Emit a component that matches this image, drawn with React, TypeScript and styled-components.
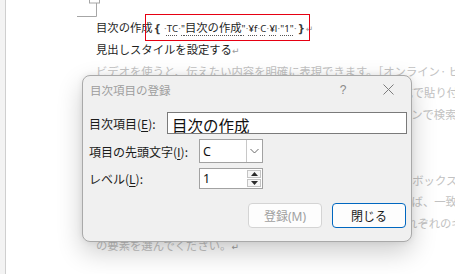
import styled, { createGlobalStyle } from 'styled-components'

const GlobalStyle = createGlobalStyle`
  html, body {
    margin: 0;
    padding: 0;
    background: #ffffff;
  }
  #root {
    width: 455px;
    height: 274px;
    overflow: hidden;
  }
`

const Screen = styled.div`
  position: relative;
  display: flex;
  width: 455px;
  height: 274px;
  overflow: hidden;
  background: #ffffff;
  font-family: 'Noto Sans CJK JP', sans-serif;
`

const Gutter = styled.div`
  flex: none;
  width: 5px;
  background: #f3f3f3;
  border-right: 1px solid #cfcfcf;
`

const Page = styled.div`
  flex: 1;
  min-width: 0;
  display: flex;
  flex-direction: column;
`

const CropMark = styled.svg`
  display: block;
  flex: none;
  margin-left: 66px;
`

const TextBlock = styled.div`
  padding-left: 90px;
`

const Line = styled.div<{ $faded?: boolean }>`
  height: 21.8px;
  line-height: 21.8px;
  font-size: 11.33px;
  white-space: nowrap;
  color: ${p => (p.$faded ? '#c2c2c2' : '#1e1e1e')};
`

const Mark = styled.span`
  color: #9c9c9c;
  font-family: 'DejaVu Sans', sans-serif;
  font-size: 9px;
`

const Brace = styled.span<{ $gap: number }>`
  display: inline-block;
  font-family: 'DejaVu Sans', sans-serif;
  font-weight: bold;
  font-size: 10px;
  color: #3a3a3a;
  margin-right: ${p => p.$gap}px;
  margin-left: 1px;
`

const FieldCode = styled.span`
  font-family: 'Noto Sans', 'Noto Sans CJK JP', sans-serif;
  font-size: 9.6px;
  text-decoration: underline dotted #555;
  text-underline-offset: 3px;
`

const FieldKanji = styled.span`
  font-family: 'Noto Sans CJK JP', sans-serif;
  font-size: 11.33px;
`

const Dot = styled.span`
  display: inline-block;
  width: 3px;
  text-align: center;
  color: #8a8a8a;
`

const Highlight = styled.div`
  position: absolute;
  left: 145px;
  top: 14px;
  width: 165px;
  height: 27px;
  box-sizing: border-box;
  border: 1.5px solid #e60012;
`

const Dialog = styled.div`
  position: absolute;
  left: 82px;
  top: 75px;
  width: 330px;
  height: 167px;
  box-sizing: border-box;
  display: flex;
  flex-direction: column;
  border: 1px solid #a9a9a9;
  border-radius: 8px;
  background: #f0f0f0;
  box-shadow: 0 10px 26px rgba(0, 0, 0, 0.2), 0 0 6px rgba(0, 0, 0, 0.08);
  font-family: 'Noto Sans', 'Noto Sans CJK JP', sans-serif;
`

const TitleBar = styled.div`
  height: 27px;
  display: flex;
  align-items: center;
  padding-left: 7px;
`

const Title = styled.div`
  flex: 1;
  font-family: 'Noto Sans CJK JP', sans-serif;
  font-size: 11.5px;
  color: #9d9d9d;
`

const TitleButton = styled.div<{ $width: number }>`
  width: ${p => p.$width}px;
  display: flex;
  justify-content: center;
  align-items: center;
  color: #8a8a8a;
  font-size: 12px;
  font-family: 'Liberation Sans', sans-serif;
`

const Form = styled.div`
  display: flex;
  flex-direction: column;
  padding: 9px 4px 0 6px;
`

const Row = styled.div<{ $height: number; $gap: number }>`
  display: flex;
  align-items: center;
  height: ${p => p.$height}px;
  margin-bottom: ${p => p.$gap}px;
`

const Label = styled.div<{ $width: number }>`
  flex: none;
  width: ${p => p.$width}px;
  font-size: 12px;
  color: #1a1a1a;
  font-family: 'Noto Sans CJK JP', sans-serif;
  white-space: nowrap;

  u {
    text-decoration-thickness: 1px;
    text-underline-offset: 2px;
  }
`

const EntryField = styled.div`
  flex: 1;
  height: 100%;
  box-sizing: border-box;
  border: 1px solid #7a7a7a;
  background: #ffffff;
  padding-left: 4px;
  display: flex;
  align-items: flex-end;
  overflow: hidden;
  font-family: 'Noto Sans CJK JP', sans-serif;
  font-size: 15.5px;
  line-height: 16px;
  color: #111;
`

const SmallBox = styled.div`
  width: 64px;
  height: 100%;
  box-sizing: border-box;
  border: 1px solid #a2a2a2;
  background: #ffffff;
  display: flex;
  align-items: stretch;
`

const BoxValue = styled.div`
  flex: 1;
  display: flex;
  align-items: center;
  padding-left: 3px;
  font-size: 12.5px;
  color: #111;
`

const DropButton = styled.div`
  width: 15px;
  border-left: 1px solid #c8c8c8;
  display: flex;
  align-items: center;
  justify-content: center;
`

const SpinColumn = styled.div`
  width: 14px;
  display: flex;
  flex-direction: column;
  gap: 1px;
  padding: 1px 1px 1px 0;
`

const SpinButton = styled.div`
  flex: 1;
  border: 1px solid #c4c4c4;
  background: #f6f6f6;
  display: flex;
  align-items: center;
  justify-content: center;
`

const Buttons = styled.div`
  display: flex;
  justify-content: flex-end;
  gap: 10px;
  margin-top: 14px;
  padding-right: 1px;
`

const Button = styled.div<{ $primary?: boolean }>`
  width: 74px;
  height: 25px;
  box-sizing: border-box;
  border-radius: 4px;
  display: flex;
  align-items: center;
  justify-content: center;
  background: #fdfdfd;
  font-family: 'Noto Sans', 'Noto Sans CJK JP', sans-serif;
  font-size: 12px;
  border: ${p => (p.$primary ? '1.5px solid #0067c0' : '1px solid #d4d4d4')};
  color: ${p => (p.$primary ? '#1a1a1a' : '#a0a0a0')};
`

const App = () => (
  <Screen>
    <GlobalStyle />
    <Gutter />
    <Page>
      <CropMark width={34} height={17} viewBox="0 0 34 17">
        <path d="M5 16.5 H24.5 V0" fill="none" stroke="#a6a6a6" strokeWidth={1} />
        <rect x={17.5} y={-1} width={10} height={4} fill="#fff" stroke="#a6a6a6" strokeWidth={1} />
      </CropMark>
      <TextBlock>
        <Line>
          目次の作成<Brace $gap={3}>{'{'}</Brace>
          <FieldCode>
            <Dot>·</Dot>TC<Dot>·</Dot>"<FieldKanji>目次の作成</FieldKanji>"<Dot>·</Dot>¥f<Dot>·</Dot>C<Dot>·</Dot>¥l<Dot>·</Dot>"1"<Dot>·</Dot>
          </FieldCode>
          <Brace $gap={1}>{'}'}</Brace>
          <Mark>↵</Mark>
        </Line>
        <Line>
          見出しスタイルを設定する<Mark>↵</Mark>
        </Line>
        <Line $faded>ビデオを使うと、伝えたい内容を明確に表現できます。［オンライン· ビデオ］をクリックすると</Line>
        <Line $faded>クリックすると、追加したいビデオを、埋め込みコードの形式で貼り付けできるようになります。</Line>
        <Line $faded>ます。キーワードを入力して、文書に最適なビデオをオンラインで検索</Line>
        <Line $faded>
          することもできます。<Mark>↵</Mark>
        </Line>
        <Line $faded>
          <Mark>↵</Mark>
        </Line>
        <Line $faded>ワードに用意されているヘッダー、フッター、表紙、テキストボックス・デザインを組み合わせると</Line>
        <Line $faded>デザインを組み合わせると、良い文書を作成できます。たとえば、一致する表紙、ヘッダー</Line>
        <Line $faded>サイドバーを追加できます。［挿入］をクリックしてから、それぞれのギャラリーで目的</Line>
        <Line $faded>
          の要素を選んでください。<Mark>↵</Mark>
        </Line>
      </TextBlock>
    </Page>

    <Highlight />

    <Dialog>
      <TitleBar>
        <Title>目次項目の登録</Title>
        <TitleButton $width={44}>?</TitleButton>
        <TitleButton $width={46}>
          <svg width={11} height={11} viewBox="0 0 11 11">
            <path d="M0.5 0.5 L10.5 10.5 M10.5 0.5 L0.5 10.5" stroke="#7d7d7d" strokeWidth={1} />
          </svg>
        </TitleButton>
      </TitleBar>
      <Form>
        <Row $height={22} $gap={5}>
          <Label $width={78}>
            目次項目(<u>E</u>):
          </Label>
          <EntryField>目次の作成</EntryField>
        </Row>
        <Row $height={24} $gap={5}>
          <Label $width={110}>
            項目の先頭文字(<u>I</u>):
          </Label>
          <SmallBox>
            <BoxValue>C</BoxValue>
            <DropButton>
              <svg width={9} height={6} viewBox="0 0 9 6">
                <path d="M0.5 1 L4.5 5 L8.5 1" fill="none" stroke="#6a6a6a" strokeWidth={1} />
              </svg>
            </DropButton>
          </SmallBox>
        </Row>
        <Row $height={21} $gap={0}>
          <Label $width={110}>
            レベル(<u>L</u>):
          </Label>
          <SmallBox>
            <BoxValue>1</BoxValue>
            <SpinColumn>
              <SpinButton>
                <svg width={7} height={4} viewBox="0 0 7 4">
                  <path d="M0 4 L3.5 0 L7 4 Z" fill="#2b2b2b" />
                </svg>
              </SpinButton>
              <SpinButton>
                <svg width={7} height={4} viewBox="0 0 7 4">
                  <path d="M0 0 L7 0 L3.5 4 Z" fill="#2b2b2b" />
                </svg>
              </SpinButton>
            </SpinColumn>
          </SmallBox>
        </Row>
        <Buttons>
          <Button>登録(M)</Button>
          <Button $primary>閉じる</Button>
        </Buttons>
      </Form>
    </Dialog>
  </Screen>
)

export default App
